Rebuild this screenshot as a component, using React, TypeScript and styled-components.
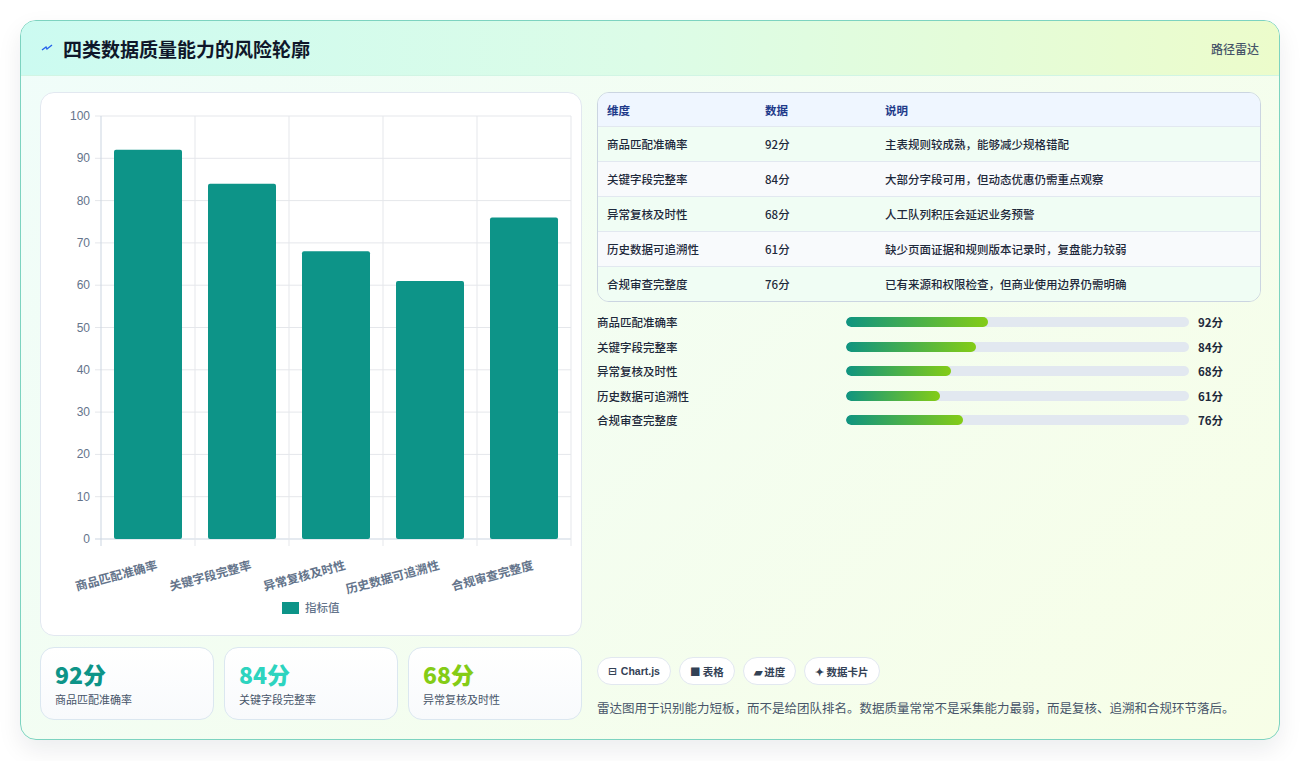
import React from 'react';
import styled, { createGlobalStyle } from 'styled-components';

const GlobalStyle = createGlobalStyle`
  html, body { margin: 0; padding: 0; background: #ffffff; }
  body { font-family: "Noto Sans CJK SC", "Noto Sans", sans-serif; color: #0f172a; }
  * { box-sizing: border-box; }
`;

const ROWS = [
  { name: '商品匹配准确率', value: 92, note: '主表规则较成熟，能够减少规格错配' },
  { name: '关键字段完整率', value: 84, note: '大部分字段可用，但动态优惠仍需重点观察' },
  { name: '异常复核及时性', value: 68, note: '人工队列积压会延迟业务预警' },
  { name: '历史数据可追溯性', value: 61, note: '缺少页面证据和规则版本记录时，复盘能力较弱' },
  { name: '合规审查完整度', value: 76, note: '已有来源和权限检查，但商业使用边界仍需明确' },
];

const Page = styled.div`
  padding: 20px 20px 20px 20px;
  height: 761px;
`;

const Card = styled.div`
  width: 1260px;
  height: 720px;
  border: 1px solid #7dd3c0;
  border-radius: 16px;
  overflow: hidden;
  background: linear-gradient(135deg, #f0fdfa 0%, #f7fee7 100%);
  box-shadow: 0 10px 24px rgba(15, 23, 42, 0.08);
  display: flex;
  flex-direction: column;
`;

const Header = styled.div`
  height: 55px;
  flex-shrink: 0;
  display: flex;
  align-items: center;
  justify-content: space-between;
  padding: 0 20px;
  background: linear-gradient(90deg, #ccfbf1 0%, #dcfce7 50%, #ecfccb 100%);
  border-bottom: 1px solid #d1f5e4;
`;

const Title = styled.h1`
  margin: 0;
  font-size: 19px;
  font-weight: 700;
  color: #0f172a;
  display: flex;
  align-items: center;
  gap: 10px;
`;

const Tag = styled.span`
  font-size: 12px;
  color: #475569;
  font-weight: 500;
`;

const Body = styled.div`
  flex: 1;
  display: grid;
  grid-template-columns: 542px 1fr;
  gap: 15px;
  padding: 16px 18px 18px 19px;
`;

const LeftCol = styled.div`
  display: flex;
  flex-direction: column;
  gap: 11px;
`;

const ChartCard = styled.div`
  height: 544px;
  background: #ffffff;
  border: 1px solid #e2e8f0;
  border-radius: 14px;
`;

const Kpis = styled.div`
  display: grid;
  grid-template-columns: repeat(3, 1fr);
  gap: 10px;
`;

const Kpi = styled.div`
  height: 73px;
  border: 1px solid #dbe7f0;
  border-radius: 14px;
  background: linear-gradient(180deg, #ffffff 0%, #f8fafc 100%);
  padding: 11px 14px;
`;

const KpiValue = styled.div<{ $color: string }>`
  font-size: 23px;
  font-weight: 800;
  line-height: 30px;
  color: ${p => p.$color};
`;

const KpiLabel = styled.div`
  font-size: 11px;
  color: #475569;
  margin-top: 2px;
`;

const RightCol = styled.div`
  display: flex;
  flex-direction: column;
`;

const Table = styled.div`
  border: 1px solid #cbd5e1;
  border-radius: 12px;
  overflow: hidden;
  font-size: 11.5px;
`;

const Row = styled.div<{ $head?: boolean; $alt?: boolean }>`
  display: grid;
  grid-template-columns: 158px 120px 1fr;
  align-items: center;
  padding: 0 9px;
  height: ${p => (p.$head ? 33 : 35)}px;
  background: ${p => (p.$head ? '#eff6ff' : p.$alt ? '#f8fafc' : '#f0fdf4')};
  border-top: ${p => (p.$head ? 'none' : '1px solid #e2e8f0')};
  color: ${p => (p.$head ? '#1e3a8a' : '#1e293b')};
  font-weight: ${p => (p.$head ? 600 : 500)};
`;

const Bars = styled.div`
  margin-top: 12px;
  display: flex;
  flex-direction: column;
  gap: 14.5px;
`;

const BarRow = styled.div`
  display: grid;
  grid-template-columns: 249px 343px 1fr;
  align-items: center;
  gap: 0;
  font-size: 11.5px;
  height: 10px;
  color: #1e293b;
  font-weight: 500;
`;

const Track = styled.div`
  height: 10px;
  border-radius: 5px;
  background: #e2e8f0;
  overflow: hidden;
`;

const Fill = styled.div`
  height: 100%;
  border-radius: 5px;
  background: linear-gradient(90deg, #0f9480 0%, #84cc16 100%);
`;

const BarVal = styled.span`
  padding-left: 9px;
  font-weight: 700;
`;

const Spacer = styled.div`
  flex: 1;
`;

const Chips = styled.div`
  display: flex;
  gap: 8px;
`;

const Chip = styled.span`
  height: 28px;
  padding: 0 10px;
  border-radius: 14px;
  border: 1px solid #e2e8f0;
  background: #ffffff;
  display: inline-flex;
  align-items: center;
  gap: 4px;
  font-size: 10.5px;
  font-weight: 700;
  color: #334155;
`;

const Note = styled.p`
  margin: 13px 0 4px 0;
  font-size: 12.5px;
  color: #475569;
  white-space: nowrap;
`;

function BarChart() {
  const top = 23, bottom = 446, left = 60, right = 530;
  const step = (right - left) / 5;
  const y = (v: number) => bottom - ((bottom - top) * v) / 100;
  return (
    <svg width="540" height="542" viewBox="0 0 540 542">
      {[0, 10, 20, 30, 40, 50, 60, 70, 80, 90, 100].map(t => (
        <g key={t}>
          <line x1={left - 6} x2={right} y1={y(t)} y2={y(t)} stroke={t === 0 ? '#cbd5e1' : '#e5e7eb'} />
          <text x={left - 11} y={y(t) + 4} textAnchor="end" fontSize="12" fill="#64748b" fontFamily="Liberation Sans, sans-serif">{t}</text>
        </g>
      ))}
      {[0, 1, 2, 3, 4, 5].map(i => (
        <line key={i} x1={left + i * step} x2={left + i * step} y1={top} y2={bottom + 7} stroke={i === 0 ? '#cbd5e1' : '#e5e7eb'} />
      ))}
      {ROWS.map((r, i) => {
        const cx = left + step * i + step / 2;
        return (
          <g key={r.name}>
            <rect x={cx - 34} y={y(r.value)} width={68} height={bottom - y(r.value)} rx={2} fill="#0d9488" />
            <text
              x={cx + 10}
              y={bottom + 30}
              textAnchor="end"
              fontSize="12"
              fontWeight="600"
              fill="#64748b"
              transform={`rotate(-15 ${cx + 10} ${bottom + 30})`}
            >
              {r.name}
            </text>
          </g>
        );
      })}
      <rect x={241} y={509} width={17} height={12} fill="#0d9488" />
      <text x={264} y={519} fontSize="11.5" fill="#64748b" fontWeight="500">指标值</text>
    </svg>
  );
}

export default function App() {
  return (
    <>
      <GlobalStyle />
      <Page>
        <Card>
          <Header>
            <Title>
              <svg width="12" height="10" viewBox="0 0 12 10">
                <path d="M1 7 L5 4 L6 6 L11 2" stroke="#2563eb" strokeWidth="1.4" fill="none" />
              </svg>
              四类数据质量能力的风险轮廓
            </Title>
            <Tag>路径雷达</Tag>
          </Header>
          <Body>
            <LeftCol>
              <ChartCard>
                <BarChart />
              </ChartCard>
              <Kpis>
                <Kpi>
                  <KpiValue $color="#0d9488">92分</KpiValue>
                  <KpiLabel>商品匹配准确率</KpiLabel>
                </Kpi>
                <Kpi>
                  <KpiValue $color="#2dd4bf">84分</KpiValue>
                  <KpiLabel>关键字段完整率</KpiLabel>
                </Kpi>
                <Kpi>
                  <KpiValue $color="#84cc16">68分</KpiValue>
                  <KpiLabel>异常复核及时性</KpiLabel>
                </Kpi>
              </Kpis>
            </LeftCol>
            <RightCol>
              <Table>
                <Row $head>
                  <span>维度</span>
                  <span>数据</span>
                  <span>说明</span>
                </Row>
                {ROWS.map((r, i) => (
                  <Row key={r.name} $alt={i % 2 === 1}>
                    <span>{r.name}</span>
                    <span>{r.value}分</span>
                    <span>{r.note}</span>
                  </Row>
                ))}
              </Table>
              <Bars>
                {ROWS.map(r => (
                  <BarRow key={r.name}>
                    <span>{r.name}</span>
                    <Track>
                      <Fill style={{ width: `${r.value * 0.45}%` }} />
                    </Track>
                    <BarVal>{r.value}分</BarVal>
                  </BarRow>
                ))}
              </Bars>
              <Spacer />
              <Chips>
                <Chip><span style={{ fontFamily: 'DejaVu Sans' }}>⊟</span><span style={{ fontFamily: 'Liberation Sans' }}>Chart.js</span></Chip>
                <Chip>■ 表格</Chip>
                <Chip>▰ 进度</Chip>
                <Chip>✦ 数据卡片</Chip>
              </Chips>
              <Note>雷达图用于识别能力短板，而不是给团队排名。数据质量常常不是采集能力最弱，而是复核、追溯和合规环节落后。</Note>
            </RightCol>
          </Body>
        </Card>
      </Page>
    </>
  );
}
